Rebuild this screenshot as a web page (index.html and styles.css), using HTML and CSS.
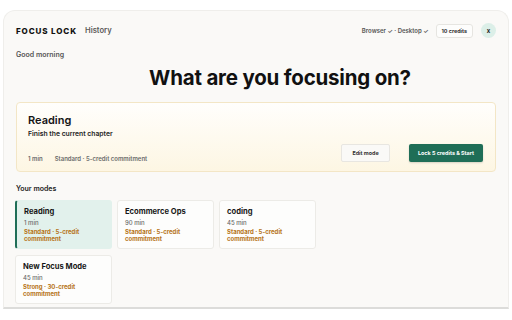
FILE: index.html
```html
<!DOCTYPE html>
<html lang="en">
<head>
    <meta charset="UTF-8">
    <meta name="viewport" content="width=device-width, initial-scale=1.0">
    <title>Focus Lock</title>
    <link rel="stylesheet" href="styles.css">
</head>
<body>
    <div class="panel">
        <header class="topbar">
            <div class="brand">
                <span class="logo">FOCUS LOCK</span>
                <a class="nav-link" href="#">History</a>
            </div>
            <div class="status">
                <span class="devices">Browser ✓ · Desktop ✓</span>
                <span class="credits">10 credits</span>
                <button class="close" type="button">x</button>
            </div>
        </header>

        <p class="greeting">Good morning</p>
        <h1 class="headline">What are you focusing on?</h1>

        <!-- Current mode -->
        <section class="current">
            <h2>Reading</h2>
            <p class="goal">Finish the current chapter</p>
            <div class="current-foot">
                <div class="meta">
                    <span>1 min</span>
                    <span>Standard · 5-credit commitment</span>
                </div>
                <div class="actions">
                    <button class="btn-edit" type="button">Edit mode</button>
                    <button class="btn-lock" type="button">Lock 5 credits &amp; Start</button>
                </div>
            </div>
        </section>

        <!-- Saved modes -->
        <h3 class="section-title">Your modes</h3>
        <div class="modes">
            <div class="mode active">
                <div class="mode-name">Reading</div>
                <div class="mode-time">1 min</div>
                <div class="mode-level">Standard · 5-credit commitment</div>
            </div>
            <div class="mode">
                <div class="mode-name">Ecommerce Ops</div>
                <div class="mode-time">90 min</div>
                <div class="mode-level">Standard · 5-credit commitment</div>
            </div>
            <div class="mode">
                <div class="mode-name">coding</div>
                <div class="mode-time">45 min</div>
                <div class="mode-level">Standard · 5-credit commitment</div>
            </div>
            <div class="mode">
                <div class="mode-name">New Focus Mode</div>
                <div class="mode-time">45 min</div>
                <div class="mode-level">Strong · 30-credit commitment</div>
            </div>
        </div>
    </div>
</body>
</html>
```

FILE: styles.css
```css
/* Reset some default styles */
body, h1, h2, h3, p, button {
    margin: 0;
    padding: 0;
    box-sizing: border-box;
}

* {
    box-sizing: border-box;
}

body {
    font-family: Inter, "Noto Sans", sans-serif;
    background-color: #ffffff;
    color: #161616;
    overflow: hidden;
}

.panel {
    margin: 10px 3px 0;
    height: 299px;
    padding: 12px 12px 0;
    background-color: #faf9f7;
    border: 1px solid #efeeeb;
    border-bottom: 2px solid #dcdcda;
    border-radius: 12px 12px 0 0;
    overflow: hidden;
}

.topbar {
    display: flex;
    justify-content: space-between;
    align-items: center;
    height: 15px;
}

.brand {
    display: flex;
    align-items: center;
    gap: 8px;
}

.logo {
    font-size: 8px;
    font-weight: 800;
    letter-spacing: 0.9px;
    color: #111;
}

.nav-link {
    font-size: 7.6px;
    font-weight: 600;
    color: #5a5a5a;
    text-decoration: none;
}

.status {
    display: flex;
    align-items: center;
    gap: 7px;
}

.devices {
    font-size: 6px;
    font-weight: 600;
    color: #555;
}

.credits {
    display: inline-block;
    padding: 3px 5px;
    font-size: 5.4px;
    font-weight: 700;
    color: #333;
    background-color: #fdfdfc;
    border: 1px solid #e6e5e1;
    border-radius: 3px;
    margin-right: 1px;
}

.close {
    width: 15px;
    height: 15px;
    border: none;
    border-radius: 50%;
    background-color: #dcefe8;
    font-family: inherit;
    font-size: 6px;
    font-weight: 700;
    color: #222;
    line-height: 15px;
}

.greeting {
    margin-top: 12px;
    font-size: 7px;
    font-weight: 600;
    color: #555;
    line-height: 9px;
}

.headline {
    margin-top: 6px;
    text-align: center;
    font-size: 20.5px;
    font-weight: 700;
    line-height: 26px;
    letter-spacing: -0.2px;
    color: #111;
    padding-left: 48px;
}

.current {
    margin-top: 11px;
    height: 70px;
    padding: 10px 12px 10px 11px;
    background: linear-gradient(#fffefc, #fdf6e3);
    border: 1px solid #f3e6c6;
    border-radius: 4px;
}

.current h2 {
    font-size: 11px;
    font-weight: 600;
    line-height: 14px;
    color: #151515;
}

.goal {
    margin-top: 2px;
    font-size: 6.8px;
    font-weight: 600;
    line-height: 9px;
    color: #222;
}

.current-foot {
    display: flex;
    justify-content: space-between;
    align-items: center;
    margin-top: 5px;
}

.meta {
    display: flex;
    gap: 12px;
    margin-top: 12px;
    font-size: 6px;
    font-weight: 600;
    color: #6b6b6b;
}

.actions {
    display: flex;
    gap: 19px;
}

.btn-edit, .btn-lock {
    height: 18px;
    font-family: inherit;
    font-size: 5.4px;
    font-weight: 700;
    border-radius: 2px;
}

.btn-edit {
    width: 49px;
    background-color: #faf9f7;
    color: #333;
    border: 1px solid #e8e6e1;
}

.btn-lock {
    width: 74px;
    background-color: #1f6e57;
    color: #fff;
    border: none;
    box-shadow: 0 1px 2px rgba(0, 0, 0, 0.15);
}

.section-title {
    margin-top: 12px;
    font-size: 7px;
    font-weight: 600;
    line-height: 9px;
    color: #222;
}

.modes {
    display: grid;
    grid-template-columns: repeat(3, 97px);
    gap: 6px 5px;
    margin-top: 7px;
    margin-left: -1px;
}

.mode {
    height: 49px;
    padding: 6px 7px;
    background-color: #fdfdfc;
    border: 1px solid #ecebe7;
    border-radius: 3px;
}

.mode.active {
    background-color: #e2f1ec;
    border-color: #e2f1ec;
    border-left: 2px solid #1f6e57;
}

.mode-name {
    font-size: 7.6px;
    font-weight: 700;
    line-height: 10px;
    color: #161616;
}

.mode-time {
    margin-top: 1px;
    font-size: 6px;
    font-weight: 500;
    line-height: 9px;
    color: #6b6b6b;
}

.mode-level {
    margin-top: 2px;
    font-size: 6px;
    font-weight: 700;
    line-height: 6.5px;
    color: #b67418;
    width: 66px;
}
```
